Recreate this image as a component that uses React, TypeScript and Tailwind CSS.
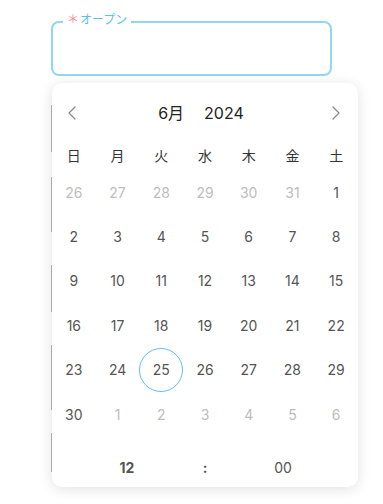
import React from "react";
import { ChevronLeft, ChevronRight } from "lucide-react";

const weekdays = ["日", "月", "火", "水", "木", "金", "土"];

type Day = { d: number; out: boolean };

function buildDays(): Day[] {
  const days: Day[] = [];
  for (let d = 26; d <= 31; d++) days.push({ d, out: true });
  for (let d = 1; d <= 30; d++) days.push({ d, out: false });
  for (let d = 1; d <= 6; d++) days.push({ d, out: true });
  return days;
}

const segments = [
  { mt: 29, h: 47 },
  { mt: 25, h: 55 },
  { mt: 33, h: 47 },
  { mt: 33, h: 65 },
  { mt: 23, h: 39 },
];

export default function App() {
  const days = buildDays();
  return (
    <div
      className="relative w-[383px] h-[504px] bg-white overflow-hidden"
      style={{ fontFamily: "Inter, 'Noto Sans CJK JP', sans-serif" }}
    >
      <div className="pl-[51px] pt-[21px]">
        <div className="relative w-[281px] h-[55px] border-2 border-[#92d6f6] rounded-lg">
          <span className="absolute top-[-12px] left-[10px] bg-white px-[4px] text-[12px] leading-[16px] flex items-center">
            <span className="text-[#f88c8c] mr-[1px]" style={{ fontFamily: "'Noto Sans CJK JP', sans-serif" }}>＊</span>
            <span className="text-[#5cc2ee]" style={{ fontFamily: "'Noto Sans CJK JP', sans-serif" }}>オープン</span>
          </span>
        </div>
        <div className="flex flex-col">
          {segments.map((s, i) => (
            <div
              key={i}
              className="w-px bg-[#b4b4b4]"
              style={{ marginTop: s.mt, height: s.h }}
            />
          ))}
        </div>
      </div>

      <div className="absolute top-[83px] left-[52px] w-[306px] bg-white rounded-[10px] shadow-[0_2px_14px_rgba(0,0,0,0.12)] z-10 pt-2">
        <div className="h-[44px] flex items-center justify-between pl-2 pr-[10px]">
          <ChevronLeft size={24} strokeWidth={1.25} className="text-[#8a8a8a]" />
          <div className="flex items-center gap-[20px] text-[16px] text-[#222] mr-[6px]">
            <span>6月</span>
            <span>2024</span>
          </div>
          <ChevronRight size={24} strokeWidth={1.25} className="text-[#8a8a8a]" />
        </div>
        <div className="grid grid-cols-7 mt-[5px] h-[30px] items-center text-[14px] text-[#333]">
          {weekdays.map((w) => (
            <div key={w} className="text-center" style={{ fontFamily: "'Noto Sans CJK JP', sans-serif" }}>
              {w}
            </div>
          ))}
        </div>
        <div className="grid grid-cols-7 auto-rows-[44.4px] text-[14px]">
          {days.map((day, i) => {
            const selected = !day.out && day.d === 25;
            return (
              <div key={i} className="flex items-center justify-center">
                <div
                  className={
                    "w-[44px] h-[44px] rounded-full flex items-center justify-center " +
                    (selected ? "border border-[#5cc2ee] " : "") +
                    (day.out ? "text-[#bdbdbd]" : "text-[#555]")
                  }
                >
                  {day.d}
                </div>
              </div>
            );
          })}
        </div>
        <div className="grid grid-cols-3 px-9 mt-[11px] h-[40px] items-center text-[14px] text-[#555]">
          <div className="flex items-center justify-center font-bold">12</div>
          <div className="flex items-center justify-center font-bold">:</div>
          <div className="flex items-center justify-center">00</div>
        </div>
      </div>
    </div>
  );
}
